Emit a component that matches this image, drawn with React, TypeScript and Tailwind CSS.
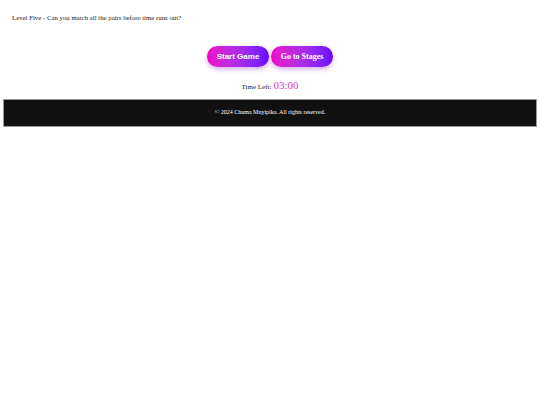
export default function App() {
  return (
    <div className="min-h-[405px] bg-white" style={{ fontFamily: '"Liberation Serif", "Times New Roman", serif' }}>
      <p className="px-3 pt-[13px] text-[6.8px] leading-[9px] text-[#222]">
        Level Five - Can you match all the pairs before time runs out?
      </p>

      <div className="mt-[24px] flex justify-center gap-[2px]">
        <button className="h-[21px] w-[62px] rounded-full bg-gradient-to-r from-[#f000c8] to-[#6a00ff] text-[8px] font-bold text-white shadow-[0_2px_5px_rgba(120,0,200,0.35)] [font-family:'Liberation_Sans',Arial,sans-serif]">
          Start Game
        </button>
        <button className="h-[21px] w-[62px] rounded-full bg-gradient-to-r from-[#f000c8] to-[#6a00ff] text-[8px] font-bold text-white shadow-[0_2px_5px_rgba(120,0,200,0.35)]">
          Go to Stages
        </button>
      </div>

      <div className="mt-[10px] flex items-baseline justify-center gap-[2px] text-[7px] text-[#222]">
        <span>Time Left:</span>
        <span className="text-[11px] text-[#e040b4]">03:00</span>
      </div>

      <footer className="mx-[3px] mt-[5px] flex h-[28px] items-center justify-center border border-[#999] bg-[#111] text-[6px] text-white">
        © 2024 Chuma Mnyipika. All rights reserved.
      </footer>
    </div>
  )
}
